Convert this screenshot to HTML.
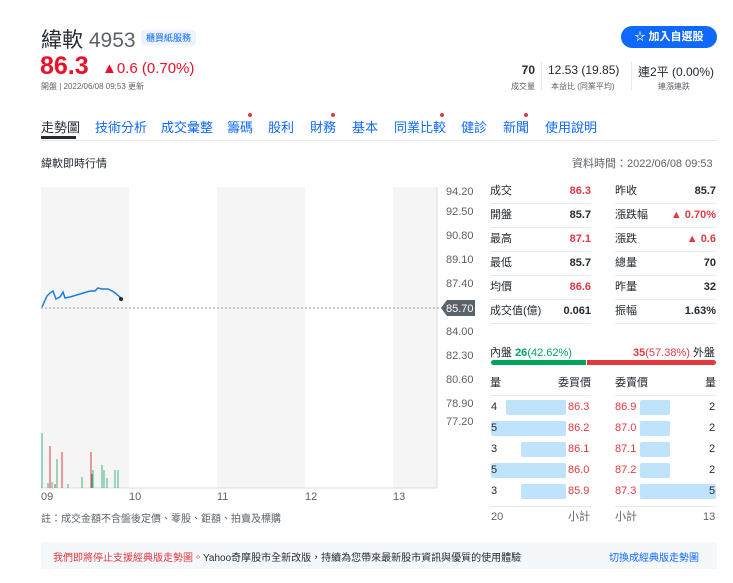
<!DOCTYPE html>
<html><head><meta charset="utf-8"><style>
*{margin:0;padding:0;box-sizing:border-box}
body{width:733px;height:583px;background:#fff;font-family:"Liberation Sans","Noto Sans CJK TC",sans-serif;color:#232a31;position:relative;overflow:hidden}
.a{position:absolute;white-space:nowrap}
.red{color:#eb0f29}
.r{color:#e0393e}
.tab{position:absolute;top:117px;font-size:13px;color:#0f69ff}
.dot{position:absolute;width:4px;height:4px;border-radius:2px;background:#e0393e}
.row{position:absolute;font-size:11px;height:24px;line-height:23px;border-bottom:1px solid #e6e8eb}
.row span{position:absolute;right:0;font-weight:bold}
.ax{position:absolute;left:446px;font-size:11px;color:#5b636a}
.ob{position:absolute;font-size:11px;height:21px;line-height:21px}
.bar{position:absolute;height:15px;background:#bfe3fb;border-radius:2px}
</style></head><body>
<div class="a" style="left:41px;top:24px;font-size:21px">緯軟 <span style="color:#5b636a;font-weight:300">4953</span></div>
<div class="a" style="left:141px;top:30px;font-size:9px;color:#0f69ff;background:#eaf3ff;padding:1px 5px;border-radius:3px">櫃買紙服務</div>
<div class="a" style="left:621px;top:26px;width:96px;height:22px;background:#0f69ff;border-radius:11px;color:#fff;font-size:11px;font-weight:bold;line-height:22px;text-align:center">☆ 加入自選股</div>
<div class="a red" style="left:40px;top:52px;font-size:25px;font-weight:bold;color:#eb0f29">86.3</div>
<div class="a red" style="left:102px;top:60px;font-size:15px;color:#eb0f29">▲0.6 (0.70%)</div>
<div class="a" style="left:41px;top:81px;font-size:8px;color:#5b636a">開盤 | 2022/06/08 09:53 更新</div>
<div class="a" style="left:500px;top:63px;width:35px;text-align:right;font-size:12px;font-weight:bold">70</div>
<div class="a" style="left:500px;top:81px;width:35px;text-align:right;font-size:8px;color:#5b636a">成交量</div>
<div class="a" style="left:541px;top:62px;width:1px;height:28px;background:#e6e8eb"></div>
<div class="a" style="left:548px;top:63px;font-size:12px">12.53 (19.85)</div>
<div class="a" style="left:551px;top:81px;font-size:8px;color:#5b636a">本益比 (同業平均)</div>
<div class="a" style="left:631px;top:62px;width:1px;height:28px;background:#e6e8eb"></div>
<div class="a" style="left:638px;top:63px;font-size:12px">連2平 (0.00%)</div>
<div class="a" style="left:658px;top:81px;font-size:8px;color:#5b636a">連漲連跌</div>
<div class="tab" style="left:41px;color:#232a31">走勢圖</div>
<div class="a" style="left:41px;top:136px;width:35px;height:3px;background:#232a31"></div>
<div class="tab" style="left:95px">技術分析</div>
<div class="tab" style="left:161px">成交彙整</div>
<div class="tab" style="left:227px">籌碼</div><div class="dot" style="left:248px;top:113px"></div>
<div class="tab" style="left:268px">股利</div>
<div class="tab" style="left:310px">財務</div><div class="dot" style="left:331px;top:113px"></div>
<div class="tab" style="left:352px">基本</div>
<div class="tab" style="left:394px">同業比較</div><div class="dot" style="left:440px;top:113px"></div>
<div class="tab" style="left:461px">健診</div>
<div class="tab" style="left:503px">新聞</div><div class="dot" style="left:524px;top:113px"></div>
<div class="tab" style="left:545px">使用說明</div>
<div class="a" style="left:41px;top:140px;width:676px;height:1px;background:#e6e8eb"></div>
<div class="a" style="left:41px;top:155px;font-size:11px">緯軟即時行情</div>
<div class="a" style="left:572px;top:155px;font-size:11px;color:#5b636a">資料時間：2022/06/08 09:53</div>
<svg class="a" style="left:0;top:0" width="733" height="583">
<rect x="41" y="187" width="88" height="301" fill="#f5f5f5"/>
<rect x="217" y="187" width="88" height="301" fill="#f5f5f5"/>
<rect x="393" y="187" width="44" height="301" fill="#f5f5f5"/>
<line x1="437" y1="187" x2="437" y2="488" stroke="#ddd"/>
<line x1="41" y1="488" x2="437" y2="488" stroke="#ddd"/>
<line x1="41" y1="308" x2="446" y2="308" stroke="#999" stroke-dasharray="2,2"/>
<polyline fill="none" stroke="#1a7ed6" stroke-width="1.5" points="42,307 47,296 50,293 53,291 56,299 60,297 63,292 65,298 70,297 80,294 90,291 95,291 98,288 102,289 108,289 114,292 121,298"/>
<circle cx="121" cy="299" r="2" fill="#232a31"/>
<polygon points="441,308 447,300 475,300 475,316 447,316" fill="#5b636a"/>
<text x="446" y="312" font-size="11" fill="#fff" font-family="Liberation Sans">85.70</text>
<g stroke="#3fb37f" stroke-width="1">
<line x1="42" y1="433" x2="42" y2="488"/><line x1="48" y1="483" x2="48" y2="488"/><line x1="57" y1="459" x2="57" y2="488"/><line x1="52" y1="482" x2="52" y2="488"/><line x1="62" y1="482" x2="62" y2="488"/><line x1="68" y1="484" x2="68" y2="488"/><line x1="82" y1="477" x2="82" y2="488"/><line x1="92" y1="474" x2="92" y2="488"/><line x1="93" y1="470" x2="93" y2="488"/><line x1="102" y1="465" x2="102" y2="488"/><line x1="104" y1="470" x2="104" y2="488"/><line x1="107" y1="478" x2="107" y2="488"/><line x1="115" y1="470" x2="115" y2="488"/><line x1="118" y1="470" x2="118" y2="488"/></g>
<g stroke="#e0393e" stroke-width="1">
<line x1="50" y1="446" x2="50" y2="488"/><line x1="62" y1="452" x2="62" y2="488"/><line x1="91" y1="452" x2="91" y2="488"/><line x1="55" y1="484" x2="55" y2="488"/></g>
</svg>
<div class="ax" style="top:186px">94.20</div><div class="ax" style="top:206px">92.50</div><div class="ax" style="top:230px">90.80</div><div class="ax" style="top:254px">89.10</div><div class="ax" style="top:278px">87.40</div><div class="ax" style="top:326px">84.00</div><div class="ax" style="top:350px">82.30</div><div class="ax" style="top:374px">80.60</div><div class="ax" style="top:398px">78.90</div><div class="ax" style="top:416px">77.20</div>
<div class="a" style="left:41px;top:491px;font-size:11px;color:#5b636a">09</div>
<div class="a" style="left:129px;top:491px;font-size:11px;color:#5b636a">10</div>
<div class="a" style="left:217px;top:491px;font-size:11px;color:#5b636a">11</div>
<div class="a" style="left:305px;top:491px;font-size:11px;color:#5b636a">12</div>
<div class="a" style="left:393px;top:491px;font-size:11px;color:#5b636a">13</div>
<div class="a" style="left:41px;top:510px;font-size:10px;color:#5b636a">註：成交金額不含盤後定價、零股、鉅額、拍賣及標購</div>
<div class="row" style="left:490px;top:180px;width:101px">成交<span class="r">86.3</span></div>
<div class="row" style="left:490px;top:204px;width:101px">開盤<span>85.7</span></div>
<div class="row" style="left:490px;top:228px;width:101px">最高<span class="r">87.1</span></div>
<div class="row" style="left:490px;top:252px;width:101px">最低<span>85.7</span></div>
<div class="row" style="left:490px;top:276px;width:101px">均價<span class="r">86.6</span></div>
<div class="row" style="left:490px;top:300px;width:101px">成交值(億)<span>0.061</span></div>
<div class="row" style="left:615px;top:180px;width:101px">昨收<span>85.7</span></div>
<div class="row" style="left:615px;top:204px;width:101px">漲跌幅<span class="r">▲ 0.70%</span></div>
<div class="row" style="left:615px;top:228px;width:101px">漲跌<span class="r">▲ 0.6</span></div>
<div class="row" style="left:615px;top:252px;width:101px">總量<span>70</span></div>
<div class="row" style="left:615px;top:276px;width:101px">昨量<span>32</span></div>
<div class="row" style="left:615px;top:300px;width:101px">振幅<span>1.63%</span></div>
<div class="a" style="left:490px;top:344px;font-size:11px">內盤 <b style="color:#00a35c">26</b><span style="color:#00a35c">(42.62%)</span></div>
<div class="a" style="left:633px;top:344px;font-size:11px"><b class="r">35</b><span class="r">(57.38%)</span> 外盤</div>
<div class="a" style="left:491px;top:360px;width:95px;height:5px;background:#00a35c;border-radius:3px 0 0 3px"></div>
<div class="a" style="left:587px;top:360px;width:129px;height:5px;background:#e0393e;border-radius:0 3px 3px 0"></div>
<div class="a" style="left:490px;top:374px;width:101px;height:22px;border-bottom:1px solid #e6e8eb;font-size:11px">量<span style="position:absolute;right:0">委買價</span></div>
<div class="a" style="left:615px;top:374px;width:101px;height:22px;border-bottom:1px solid #e6e8eb;font-size:11px">委賣價<span style="position:absolute;right:0">量</span></div>
<div class="bar" style="left:506px;top:400px;width:60px"></div>
<div class="bar" style="left:491px;top:421px;width:75px"></div>
<div class="bar" style="left:521px;top:442px;width:45px"></div>
<div class="bar" style="left:491px;top:463px;width:75px"></div>
<div class="bar" style="left:521px;top:484px;width:45px"></div>
<div class="bar" style="left:640px;top:400px;width:30px"></div>
<div class="bar" style="left:640px;top:421px;width:30px"></div>
<div class="bar" style="left:640px;top:442px;width:30px"></div>
<div class="bar" style="left:640px;top:463px;width:30px"></div>
<div class="bar" style="left:640px;top:484px;width:76px"></div>
<div class="ob" style="left:491px;top:397px">4</div><div class="ob r" style="left:568px;top:397px">86.3</div><div class="ob r" style="left:615px;top:397px">86.9</div><div class="ob" style="left:709px;top:397px">2</div>
<div class="ob" style="left:491px;top:418px">5</div><div class="ob r" style="left:568px;top:418px">86.2</div><div class="ob r" style="left:615px;top:418px">87.0</div><div class="ob" style="left:709px;top:418px">2</div>
<div class="ob" style="left:491px;top:439px">3</div><div class="ob r" style="left:568px;top:439px">86.1</div><div class="ob r" style="left:615px;top:439px">87.1</div><div class="ob" style="left:709px;top:439px">2</div>
<div class="ob" style="left:491px;top:460px">5</div><div class="ob r" style="left:568px;top:460px">86.0</div><div class="ob r" style="left:615px;top:460px">87.2</div><div class="ob" style="left:709px;top:460px">2</div>
<div class="ob" style="left:491px;top:481px">3</div><div class="ob r" style="left:568px;top:481px">85.9</div><div class="ob r" style="left:615px;top:481px">87.3</div><div class="ob" style="left:709px;top:481px">5</div>
<div class="a" style="left:490px;top:506px;width:101px;height:1px;background:#e6e8eb"></div>
<div class="a" style="left:615px;top:506px;width:101px;height:1px;background:#e6e8eb"></div>
<div class="ob" style="left:491px;top:507px;color:#5b636a">20</div><div class="ob" style="left:568px;top:507px;color:#5b636a">小計</div>
<div class="ob" style="left:615px;top:507px;color:#5b636a">小計</div><div class="ob" style="left:703px;top:507px;color:#5b636a">13</div>
<div class="a" style="left:41px;top:542px;width:676px;height:27px;background:#f5f8fa"></div>
<div class="a" style="left:53px;top:549px;font-size:10px"><span class="r">我們即將停止支援經典版走勢圖。</span>Yahoo奇摩股市全新改版，持續為您帶來最新股市資訊與優質的使用體驗</div>
<div class="a" style="left:609px;top:549px;font-size:10px;color:#0f69ff">切換成經典版走勢圖</div>
</body></html>
